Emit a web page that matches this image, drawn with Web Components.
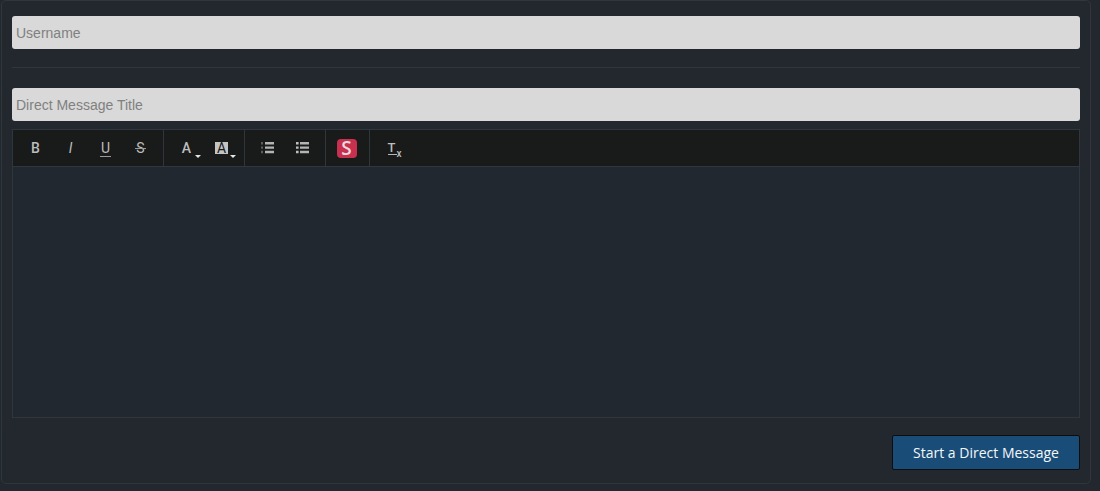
<!DOCTYPE html>
<html>
<head>
<meta charset="utf-8">
<title>Direct Message</title>
<style>
  html, body { margin: 0; background: #23282e; }
  body { width: 1100px; height: 491px; overflow: hidden; }
</style>
</head>
<body>
<dm-panel>
  <dm-input placeholder="Username"></dm-input>
  <dm-rule></dm-rule>
  <dm-input placeholder="Direct Message Title"></dm-input>
  <dm-editor>
    <tool-group>
      <tool-btn><tool-glyph kind="bold">B</tool-glyph></tool-btn>
      <tool-btn><tool-glyph kind="italic">I</tool-glyph></tool-btn>
      <tool-btn><tool-glyph kind="under">U</tool-glyph></tool-btn>
      <tool-btn><tool-glyph kind="strike">S</tool-glyph></tool-btn>
    </tool-group>
    <tool-group>
      <tool-btn caret><tool-glyph kind="color">A</tool-glyph></tool-btn>
      <tool-btn caret><tool-glyph kind="back">A</tool-glyph></tool-btn>
    </tool-group>
    <tool-group>
      <tool-btn><svg width="13" height="12" viewBox="0 0 13 12"><path d="M4 0h9v2.4H4zM4 4.4h9v2.4H4zM4 8.8h9v2.4H4z" fill="#b4b4b4"/><path d="M0 0h2v2.4H0zM0 4.4h2v2.4H0zM0 8.8h2v2.4H0z" fill="#5e5e5e"/></svg></tool-btn>
      <tool-btn><svg width="13" height="12" viewBox="0 0 13 12"><path d="M4 0h9v2.4H4zM4 4.4h9v2.4H4zM4 8.8h9v2.4H4z" fill="#b4b4b4"/><path d="M0 0h2.6v2.4H0zM0 4.4h2.6v2.4H0zM0 8.8h2.6v2.4H0z" fill="#c0c0c0"/></svg></tool-btn>
    </tool-group>
    <tool-group>
      <tool-btn narrow><tool-glyph kind="logo">S</tool-glyph></tool-btn>
    </tool-group>
    <tool-group last>
      <tool-btn><tool-glyph kind="clear">T<sub>x</sub></tool-glyph></tool-btn>
    </tool-group>
  </dm-editor>
  <dm-actions><dm-button>Start a Direct Message</dm-button></dm-actions>
</dm-panel>

<script>
class DmPanel extends HTMLElement {
  constructor() {
    super();
    this.attachShadow({ mode: 'open' }).innerHTML = `
      <style>
        :host {
          display: block;
          box-sizing: border-box;
          width: 1090px;
          height: 484px;
          margin-left: 1px;
          padding: 15px 10px 0 10px;
          border: 1px solid #30363e;
          border-radius: 5px;
          background: #23282e;
          font-family: "Liberation Sans", Arial, sans-serif;
        }
      </style>
      <slot></slot>`;
  }
}

class DmInput extends HTMLElement {
  constructor() {
    super();
    this.attachShadow({ mode: 'open' }).innerHTML = `
      <style>
        :host { display: block; height: 33px; }
        input {
          display: block;
          box-sizing: border-box;
          width: 100%;
          height: 33px;
          padding: 0 4px;
          border: 0;
          border-radius: 3px;
          background: #d9d9d9;
          font: 14px "Liberation Sans", Arial, sans-serif;
        }
        input::placeholder { color: #808080; opacity: 1; }
      </style>
      <input type="text">`;
    this.shadowRoot.querySelector('input').placeholder = this.getAttribute('placeholder') || '';
  }
}

class DmRule extends HTMLElement {
  constructor() {
    super();
    this.attachShadow({ mode: 'open' }).innerHTML = `
      <style>
        :host {
          display: block;
          height: 1px;
          margin: 18px 0 20px;
          background: #30363e;
        }
      </style>`;
  }
}

class DmEditor extends HTMLElement {
  constructor() {
    super();
    this.attachShadow({ mode: 'open' }).innerHTML = `
      <style>
        :host {
          display: block;
          box-sizing: border-box;
          height: 289px;
          margin-top: 8px;
          border: 1px solid #30363e;
          background: #22282f;
        }
        .toolbar {
          display: flex;
          height: 36px;
          background: #191b1a;
          border-bottom: 1px solid #30363e;
        }
      </style>
      <div class="toolbar"><slot></slot></div>`;
  }
}

class ToolGroup extends HTMLElement {
  constructor() {
    super();
    this.attachShadow({ mode: 'open' }).innerHTML = `
      <style>
        :host {
          display: flex;
          align-items: center;
          padding: 0 5px;
          border-right: 1px solid #30363e;
        }
        :host([last]) { border-right: 0; }
      </style>
      <slot></slot>`;
  }
}

class ToolBtn extends HTMLElement {
  constructor() {
    super();
    this.attachShadow({ mode: 'open' }).innerHTML = `
      <style>
        :host {
          display: flex;
          position: relative;
          align-items: center;
          justify-content: center;
          width: 35px;
          height: 36px;
        }
        :host([narrow]) { width: 33px; }
        :host([caret])::after {
          content: "";
          position: absolute;
          right: 3px;
          bottom: 8px;
          border: 3px solid transparent;
          border-top-color: #e6e6e6;
          border-bottom: 0;
        }
      </style>
      <slot></slot>`;
  }
}

class ToolGlyph extends HTMLElement {
  constructor() {
    super();
    this.attachShadow({ mode: 'open' }).innerHTML = `
      <style>
        :host {
          display: block;
          position: relative;
          color: #bdbdbd;
          font: 400 14px/14px Roboto, sans-serif;
          text-align: center;
        }
        :host([kind="bold"]), :host([kind="color"]) { font-weight: 500; }
        :host([kind="italic"]) { font-style: italic; }
        :host([kind="under"])::after {
          content: "";
          position: absolute;
          left: -1px;
          right: -1px;
          bottom: -2px;
          height: 1px;
          background: #9a9a9a;
        }
        :host([kind="strike"])::after {
          content: "";
          position: absolute;
          left: -1px;
          right: -1px;
          top: 7px;
          height: 1px;
          background: #9a9a9a;
        }
        :host([kind="back"]) {
          width: 13px;
          height: 12px;
          background: #c4c4c4;
          color: #191b1a;
          font-size: 14px;
          line-height: 13px;
        }
        :host([kind="logo"]) {
          width: 20px;
          height: 19px;
          left: -1px;
          border-radius: 4px;
          background: #c8304f;
          color: #eed9de;
          font: 600 19px/19px "Open Sans", sans-serif;
        }
        :host([kind="clear"]) {
          width: 14px;
          left: 2px;
          height: 14px;
          text-align: left;
          font-size: 13px;
          font-weight: 500;
        }
        :host([kind="clear"])::after {
          content: "";
          position: absolute;
          left: 0;
          top: 13px;
          width: 9px;
          height: 1px;
          background: #b8b8b8;
        }
        ::slotted(sub) {
          position: absolute;
          left: 9px;
          top: 8px;
          font-size: 10px;
          line-height: 9px;
        }
      </style>
      <slot></slot>`;
  }
}

class DmActions extends HTMLElement {
  constructor() {
    super();
    this.attachShadow({ mode: 'open' }).innerHTML = `
      <style>
        :host { display: flex; justify-content: flex-end; margin-top: 17px; }
      </style>
      <slot></slot>`;
  }
}

class DmButton extends HTMLElement {
  constructor() {
    super();
    this.attachShadow({ mode: 'open' }).innerHTML = `
      <style>
        :host {
          display: block;
          box-sizing: border-box;
          width: 188px;
          height: 35px;
          text-align: center;
          border: 1px solid #0b0d10;
          border-radius: 2px;
          background: #194d78;
          color: #f4f7fa;
          font: 14px/33px "Open Sans", sans-serif;
        }
      </style>
      <slot></slot>`;
  }
}

customElements.define('dm-panel', DmPanel);
customElements.define('dm-input', DmInput);
customElements.define('dm-rule', DmRule);
customElements.define('dm-editor', DmEditor);
customElements.define('tool-group', ToolGroup);
customElements.define('tool-btn', ToolBtn);
customElements.define('tool-glyph', ToolGlyph);
customElements.define('dm-actions', DmActions);
customElements.define('dm-button', DmButton);
</script>
</body>
</html>
